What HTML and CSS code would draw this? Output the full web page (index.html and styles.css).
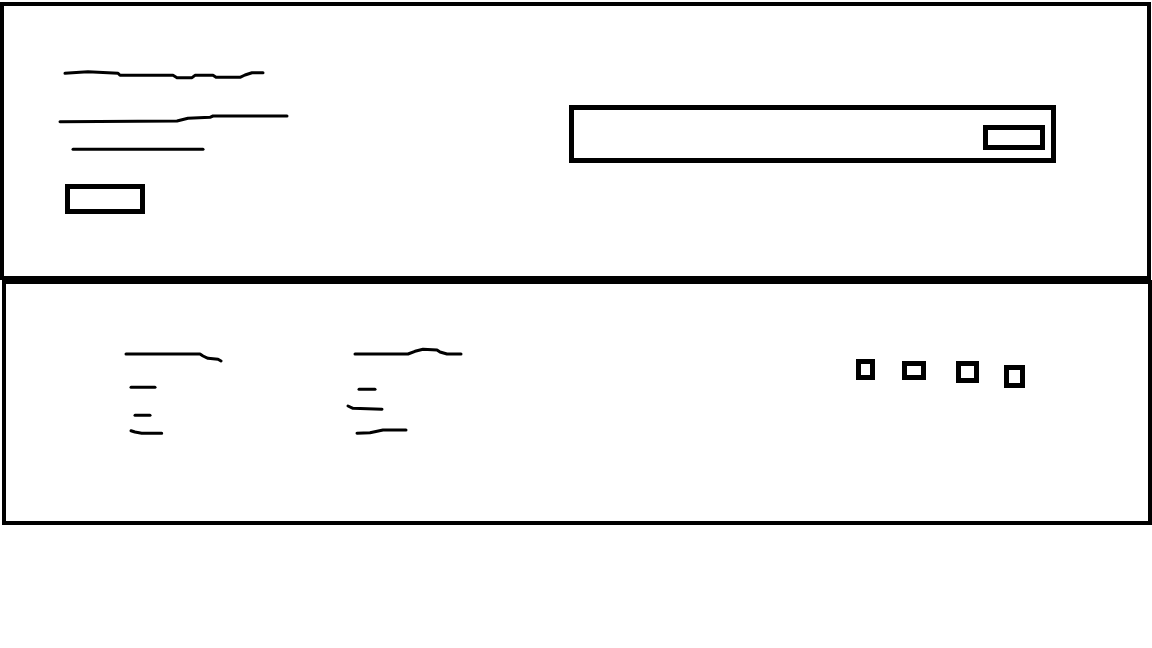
FILE: index.html
```html
<!DOCTYPE html>
<html lang="en">
  <head>
    <meta charset="utf-8" />
    <title>Landing sketch</title>
    <link rel="stylesheet" href="styles.css">
  </head>
  <body>
    <div class="page">
      <section class="hero">
        <div class="hero-text">
          <svg class="scribble hero-title" width="204" height="12" viewBox="0 0 204 12" role="img" aria-label="Heading">
            <polyline points="3,5.3 18,4.3 26,3.7 56,5.3 58,7.3 111,7.3 115,9.7 130,9.7 133,7.3 151,7.3 154,9.3 178,9.3 183,7 190,4.7 201,4.7" />
          </svg>
          <svg class="scribble hero-subtitle" width="232" height="12" viewBox="0 0 232 12" role="img" aria-label="Subheading">
            <polyline points="2,9.7 119,9 130,6.3 152,5.3 155,4 229,4" />
          </svg>
          <svg class="scribble hero-copy" width="136" height="7" viewBox="0 0 136 7" role="img" aria-label="Body text">
            <polyline points="3,3.3 133,3.3" />
          </svg>
          <button class="sketch-button hero-cta" aria-label="Call to action"></button>
        </div>
        <form class="hero-form" onsubmit="return false">
          <input class="hero-input" type="text" aria-label="Email" />
          <button class="sketch-button hero-submit" aria-label="Submit"></button>
        </form>
      </section>

      <footer class="footer">
        <nav class="links-col first">
          <svg class="scribble" width="99" height="12" viewBox="0 0 99 12" role="img" aria-label="Column title">
            <polyline points="2,3 76,3 79,5 84,7.3 94,8.3 97,10" />
          </svg>
          <svg class="scribble link-a" width="28" height="5" viewBox="0 0 28 5" role="img" aria-label="Link">
            <polyline points="2,2.3 26,2.3" />
          </svg>
          <svg class="scribble link-b" width="19" height="5" viewBox="0 0 19 5" role="img" aria-label="Link">
            <polyline points="2,2.3 17,2.3" />
          </svg>
          <svg class="scribble link-c" width="35" height="8" viewBox="0 0 35 8" role="img" aria-label="Link">
            <polyline points="2,2.7 6,4 12.7,5.3 32.7,5.3" />
          </svg>
        </nav>
        <nav class="links-col second">
          <svg class="scribble col-title" width="110" height="10" viewBox="0 0 110 10" role="img" aria-label="Column title">
            <polyline points="2,7 55,7 62,4.3 70,2.3 84,3 87,5 94,7 108,7" />
          </svg>
          <svg class="scribble link-d" width="20" height="5" viewBox="0 0 20 5" role="img" aria-label="Link">
            <polyline points="2,2.3 18,2.3" />
          </svg>
          <svg class="scribble link-e" width="38" height="9" viewBox="0 0 38 9" role="img" aria-label="Link">
            <polyline points="2,3 7,5.3 36,6.3" />
          </svg>
          <svg class="scribble link-f" width="53" height="9" viewBox="0 0 53 9" role="img" aria-label="Link">
            <polyline points="2,6.3 15,5.7 28,3 51,3" />
          </svg>
        </nav>
        <div class="social">
          <span class="social-icon one" aria-label="Social link"></span>
          <span class="social-icon two" aria-label="Social link"></span>
          <span class="social-icon three" aria-label="Social link"></span>
          <span class="social-icon four" aria-label="Social link"></span>
        </div>
      </footer>
    </div>
  </body>
</html>
```

FILE: styles.css
```css
html, body {
    margin: 0;
    padding: 0;
    background: #fff;
    font-family: "Liberation Sans", Arial, sans-serif;
}

.page {
    padding-top: 2px;
}

.scribble {
    display: block;
    fill: none;
    stroke: #000;
    stroke-width: 3;
    stroke-linecap: round;
    stroke-linejoin: round;
}

.sketch-button {
    appearance: none;
    display: block;
    box-sizing: border-box;
    border: 5px solid #000;
    background: #fff;
    padding: 0;
    margin: 0;
}

/* top block */
.hero {
    display: flex;
    align-items: flex-start;
    box-sizing: border-box;
    width: 1151px;
    height: 278px;
    border: 4px solid #000;
}
.hero-text {
    display: flex;
    flex-direction: column;
    align-items: flex-start;
    padding: 62px 0 0 54px;
}
.hero-title {
    margin-left: 4px;
}
.hero-subtitle {
    margin-top: 32px;
}
.hero-copy {
    margin: 22px 0 0 12px;
}
.hero-cta {
    margin: 31px 0 0 7px;
    width: 80px;
    height: 30px;
}

.hero-form {
    display: flex;
    align-items: flex-start;
    box-sizing: border-box;
    width: 487px;
    height: 58px;
    margin: 99px 91px 0 auto;
    padding: 15px 6px 0 0;
    border: 5px solid #000;
}
.hero-input {
    flex: 1;
    min-width: 0;
    border: none;
    outline: none;
    background: transparent;
    font: inherit;
}
.hero-submit {
    width: 62px;
    height: 25px;
}

/* bottom block */
.footer {
    display: flex;
    align-items: flex-start;
    box-sizing: border-box;
    width: 1150px;
    height: 245px;
    margin-left: 2px;
    padding: 63px 123px 0 118px;
    border: 4px solid #000;
}
.links-col {
    display: flex;
    flex-direction: column;
    align-items: flex-start;
}
.links-col.first {
    width: 222px;
    margin-top: 4px;
}
.link-a { margin: 22px 0 0 5px; }
.link-b { margin: 23px 0 0 9px; }
.link-c { margin: 10px 0 0 5px; }

.col-title { margin-left: 7px; }
.link-d { margin: 30px 0 0 11px; }
.link-e { margin-top: 11px; }
.link-f { margin: 15px 0 0 9px; }

.social {
    display: flex;
    align-items: flex-start;
    margin: 12px 0 0 auto;
}
.social-icon {
    display: block;
    box-sizing: border-box;
    border: 5px solid #000;
}
.social-icon.one { width: 19px; height: 21px; }
.social-icon.two { width: 24px; height: 19px; margin: 2px 0 0 27px; }
.social-icon.three { width: 23px; height: 22px; margin: 2px 0 0 30px; }
.social-icon.four { width: 21px; height: 23px; margin: 6px 0 0 25px; }
```
